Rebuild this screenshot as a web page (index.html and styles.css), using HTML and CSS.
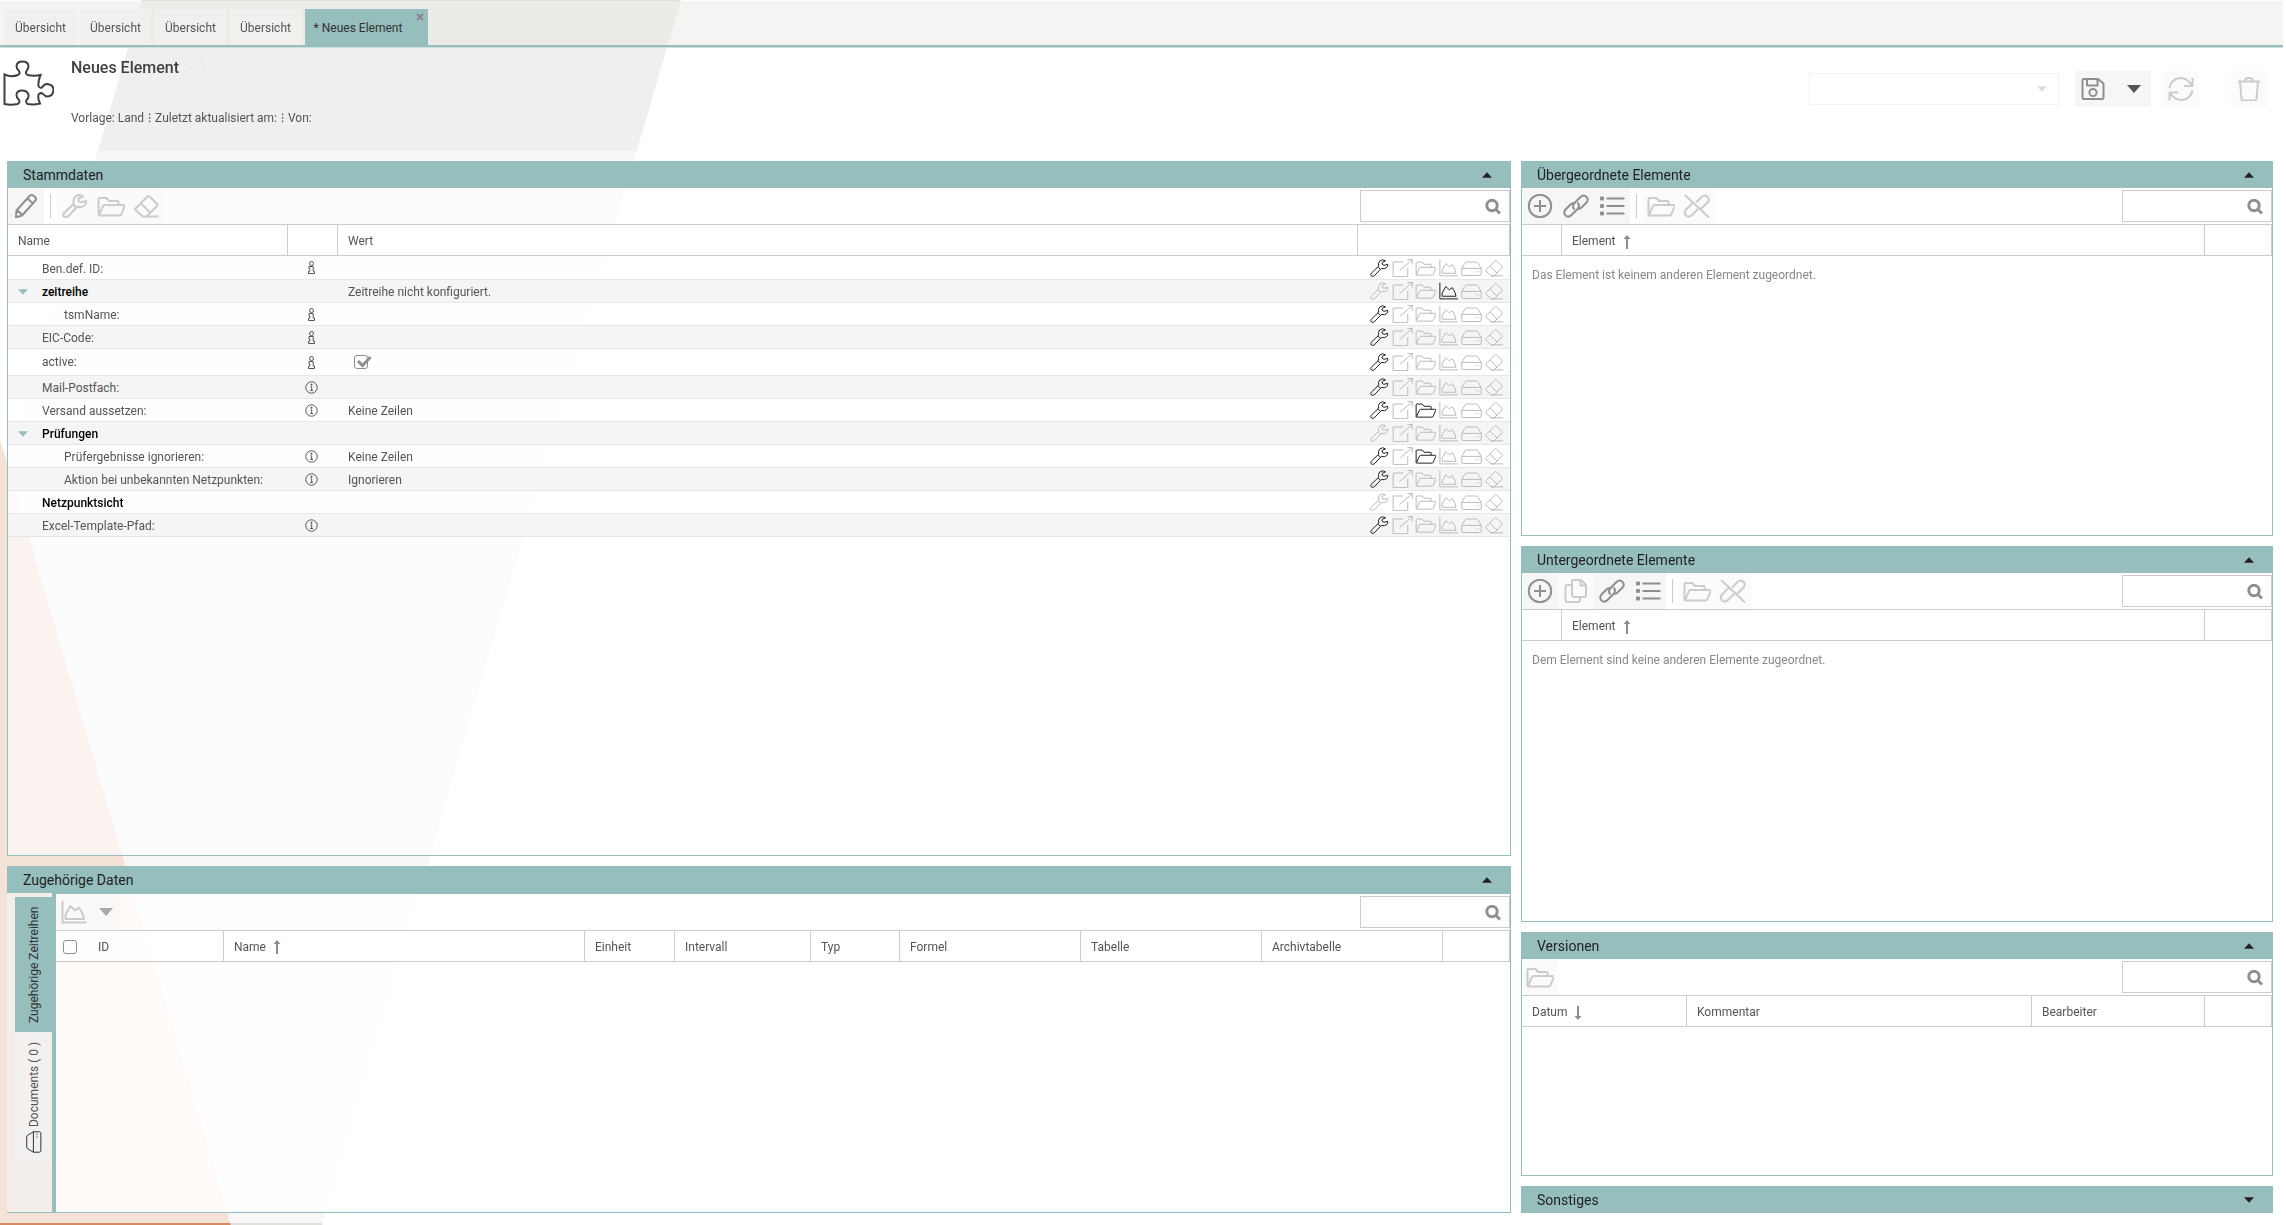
FILE: index.html
```html
<!DOCTYPE html>
<html lang="de">
<head>
<meta charset="utf-8">
<title>Neues Element</title>
<link rel="stylesheet" href="styles.css">
</head>
<body>
<svg class="sprite" aria-hidden="true">
  <symbol id="pencil" viewBox="0 0 28 24"><path d="M4.500 16.500 17.500 2q2-2 4.500 0l1 1q2 2 0 4L10 21.500 4 23.500zM4.500 16.500q3.500 1 5.500 5M15.500 4.500l5.500 5"/></symbol>
  <symbol id="wrench" viewBox="0 0 28 24"><path d="M22 2.500Q18-.5 14.500 2.500 11.500 5.500 13 9.500L3 19q-1.500 2 0 3.500t4 0L16.500 12.500q4 1.500 7-1 2-2 1.500-4.500l-5 1.500-2.500-1.500V4.500zM12 10.500l3.500 3.500M5 20.500h.500"/></symbol>
  <symbol id="folder" viewBox="0 0 28 24"><path d="M1.500 21V5q0-1 1-1h7l2.500 3H20.500q1 0 1 1v3M2 21 6 12q.5-1 1.500-1h19q1.500 0 1 1.500L24.500 20q-.5 1.500-2 1.500H2.500q-1 0-1-1"/></symbol>
  <symbol id="eraser" viewBox="0 0 28 24"><path d="M2.500 14.500 14.500 2.500q1-1 2 0l7.500 7.500q1 1 0 2L13.500 22.500H9.500L2.500 16q-1-.8 0-1.500zM8 9.500l9.500 9.500M9 22.500h16.500"/></symbol>
  <symbol id="popup" viewBox="0 0 28 24"><path d="M21 12v11.500H1.500V4H15M10 15.500 27 .800M20.500.800H27V7.500"/></symbol>
  <symbol id="chart" viewBox="0 0 28 24"><path d="M2.500 1v21.500H26.500M5.500 19V14.500l5-8.500 4.500 4.500 4-3 3.500 6 1.500 5.500z"/></symbol>
  <symbol id="drive" viewBox="0 0 28 24"><path d="M1 12.500 5.500 5q.8-1 2-1h13q1.200 0 2 1L27 12.500V20q0 2-2 2H3q-2 0-2-2zM1 12.500h26M19.500 17h1.500M23 17h1.500"/></symbol>
  <symbol id="plus" viewBox="0 0 28 24"><circle cx="14" cy="12" r="11.200"/><path d="M14 6v12M8 12h12"/></symbol>
  <symbol id="copy" viewBox="0 0 28 24"><path d="M10 1h9l5 5v10q0 2-2 2H12q-2 0-2-2V1M18.500 1v5.500H24M10 6H5Q3.500 6 3.500 8v13q0 2 2 2H16q2 0 2-2v-3"/></symbol>
  <symbol id="link" viewBox="0 0 28 24"><path d="M12.500 15.500q-3-3 0-6.500l6-6q3.500-3 6 0 2.500 2.500 0 5.500l-5 5q-1.500 1.500-3 1.500M15.500 8.500q3 3 0 6.500l-6 6q-3 3-6 .5-2.500-3 0-6l5-5q1.500-1.500 3-1.500"/></symbol>
  <symbol id="unlink" viewBox="0 0 28 24"><path d="M13 8.500l5.500-5.500q3.500-3 6 0 2.500 2.500 0 5.500l-5 5q-1 1-2 1M15 15l-6 6q-3 3-6 .500-2.500-3 0-6l5-5q1-1 2-1M2 1l24 22.500"/></symbol>
  <symbol id="list" viewBox="0 0 28 24"><path d="M8.500 4.500h18M8.500 12h18M8.500 19.500h18M3 3.500h2v2H3zM3 11h2v2H3zM3 18.500h2v2H3z"/></symbol>
  <symbol id="save" viewBox="0 0 28 24"><path d="M5 2h14l5.500 4.500V20q0 2-1.500 2H5q-1.500 0-1.500-2V4Q3.500 2 5 2zM8 2v6.500h10.500V2"/><circle cx="14" cy="15.500" r="3.600"/></symbol>
  <symbol id="refresh" viewBox="0 0 28 24"><path d="M2.500 11Q4 2 13 1q8 0 12 8M25.500 1v8H17M25.500 13q-1.500 9-10.500 10Q7 23 3 15.500M2.500 23.500V15.500H11"/></symbol>
  <symbol id="trash" viewBox="0 0 28 24"><path d="M3 4.500h22M5 4.500 6.500 22q.2 1.500 1.500 1.500h12q1.300 0 1.500-1.500L23 4.500M10 4.500Q10 1 13 1h2q3 0 3 3.500"/></symbol>
  <symbol id="loupe" viewBox="0 0 16 16"><circle cx="7" cy="6.500" r="5.200"/><path d="M10.500 10 15 14.500"/></symbol>
  <symbol id="tri-down" viewBox="0 0 14 8"><path d="M0 0h14L7 8z"/></symbol>
  <symbol id="tri-up" viewBox="0 0 14 8"><path d="M0 8h14L7 0z"/></symbol>
  <symbol id="arrow-up" viewBox="0 0 8 14"><path d="M3 14V4H.500L4 0l3.500 4H5V14z"/></symbol>
  <symbol id="arrow-down" viewBox="0 0 8 14"><path d="M3 0v10H.500L4 14l3.500-4H5V0z"/></symbol>
  <symbol id="info-i" viewBox="0 0 13 13"><circle cx="6.500" cy="2.500" r="2"/><path d="M4 5.500h4.200v4.700h1.300v2.300h-6v-2.300h1.300V7.800H4z"/></symbol>
  <symbol id="info-o" viewBox="0 0 13 13"><circle cx="6.500" cy="6.500" r="5.700"/><path d="M5.500 5.800h1.200v3.700M5.200 9.500h2.800M6 3.200h1v1H6z"/></symbol>
</svg>
<svg class="backdrop" aria-hidden="true">
  <polygon class="bd-orange" points="0,440 7,462 231,1225 0,1225"/>
  <polygon class="bd-grey" points="142,0 681,0 322,1225 231,1225 7,462"/>
</svg>
<div class="app">
  <nav class="tabs">
    <button class="tab">Übersicht</button>
    <button class="tab">Übersicht</button>
    <button class="tab">Übersicht</button>
    <button class="tab">Übersicht</button>
    <button class="tab tab-active">* Neues Element
      <svg class="tab-close" viewBox="0 0 8 8"><path d="M1 1l6 6M7 1 1 7"/></svg></button>
  </nav>
  <header class="head">
    <svg class="puzzle" viewBox="0 0 54 50" aria-hidden="true"><path d="M4.500 18.500Q11 21.500 18 19 20.500 17.500 19 15 16.500 13 16.500 10 17 5.500 22.500 5.500T28.500 10Q28.500 13 26.500 15 25 17.500 27.500 19 34 20.500 40.500 19 38 25 38.500 30 39.500 32.500 42 31.500 44 28 47 28 53.500 28.500 53.500 34 53 40 47.500 40.500 45 40.500 43 38 40.500 36 38.500 38.500 37.500 42 40 47.500 34 49 27.500 48 25.500 46.500 26.500 44 29 42 28.500 39 27.500 34.500 22 34.500T16.500 39Q16.500 42 19 44 20.500 46.500 17.500 48 11 49.500 4.500 48z"/></svg>
    <div class="head-text">
      <h1>Neues Element <span class="status"></span></h1>
      <p>Vorlage: Land <span>⁝</span> Zuletzt aktualisiert am: <span>⁝</span> Von:</p>
    </div>
    <div class="head-tools">
      <div class="pick"><select aria-label="Version" disabled><option></option></select><svg><use href="#tri-down"/></svg></div>
      <div class="save">
        <button class="tool" aria-label="Speichern"><svg><use href="#save"/></svg></button>
        <button class="tool" aria-label="Speicheroptionen"><svg class="tri"><use href="#tri-down"/></svg></button>
      </div>
      <button class="tool" aria-label="Aktualisieren" disabled><svg><use href="#refresh"/></svg></button>
      <button class="tool tool-trash" aria-label="Löschen" disabled><svg><use href="#trash"/></svg></button>
    </div>
  </header>
  <main class="main">
    <div class="col col-left">
      <section class="panel">
        <h2>Stammdaten <svg><use href="#tri-up"/></svg></h2>
        <div class="bar">
          <button class="tool" aria-label="Bearbeiten"><svg><use href="#pencil"/></svg></button>
          <span class="sep"></span>
          <button class="tool" aria-label="Konfigurieren" disabled><svg><use href="#wrench"/></svg></button>
          <button class="tool" aria-label="Öffnen" disabled><svg><use href="#folder"/></svg></button>
          <button class="tool" aria-label="Leeren" disabled><svg><use href="#eraser"/></svg></button>
          <label class="search"><input type="text" aria-label="Suche"><svg><use href="#loupe"/></svg></label>
        </div>
        <table class="grid props">
          <colgroup><col class="w280"><col class="w50"><col><col class="w152"></colgroup>
          <thead><tr><th>Name</th><th></th><th>Wert</th><th></th></tr></thead>
          <tbody>
            <tr><td>Ben.def. ID:</td><td><svg class="info"><use href="#info-i"/></svg></td><td></td><td class="acts"><button aria-label="Konfigurieren"><svg><use href="#wrench"/></svg></button><button disabled aria-label="Extern"><svg><use href="#popup"/></svg></button><button disabled aria-label="Öffnen"><svg><use href="#folder"/></svg></button><button disabled aria-label="Diagramm"><svg><use href="#chart"/></svg></button><button disabled aria-label="Ablage"><svg><use href="#drive"/></svg></button><button disabled aria-label="Leeren"><svg><use href="#eraser"/></svg></button></td></tr>
            <tr class="group"><td><svg class="caret"><use href="#tri-down"/></svg>zeitreihe</td><td></td><td>Zeitreihe nicht konfiguriert.</td><td class="acts"><button disabled aria-label="Konfigurieren"><svg><use href="#wrench"/></svg></button><button disabled aria-label="Extern"><svg><use href="#popup"/></svg></button><button disabled aria-label="Öffnen"><svg><use href="#folder"/></svg></button><button aria-label="Diagramm"><svg><use href="#chart"/></svg></button><button disabled aria-label="Ablage"><svg><use href="#drive"/></svg></button><button disabled aria-label="Leeren"><svg><use href="#eraser"/></svg></button></td></tr>
            <tr class="child"><td>tsmName:</td><td><svg class="info"><use href="#info-i"/></svg></td><td></td><td class="acts"><button aria-label="Konfigurieren"><svg><use href="#wrench"/></svg></button><button disabled aria-label="Extern"><svg><use href="#popup"/></svg></button><button disabled aria-label="Öffnen"><svg><use href="#folder"/></svg></button><button disabled aria-label="Diagramm"><svg><use href="#chart"/></svg></button><button disabled aria-label="Ablage"><svg><use href="#drive"/></svg></button><button disabled aria-label="Leeren"><svg><use href="#eraser"/></svg></button></td></tr>
            <tr><td>EIC-Code:</td><td><svg class="info"><use href="#info-i"/></svg></td><td></td><td class="acts"><button aria-label="Konfigurieren"><svg><use href="#wrench"/></svg></button><button disabled aria-label="Extern"><svg><use href="#popup"/></svg></button><button disabled aria-label="Öffnen"><svg><use href="#folder"/></svg></button><button disabled aria-label="Diagramm"><svg><use href="#chart"/></svg></button><button disabled aria-label="Ablage"><svg><use href="#drive"/></svg></button><button disabled aria-label="Leeren"><svg><use href="#eraser"/></svg></button></td></tr>
            <tr class="tall"><td><label for="active">active:</label></td><td><svg class="info"><use href="#info-i"/></svg></td><td><span class="check"><input type="checkbox" id="active" checked><svg viewBox="0 0 18 15"><path d="M4 6l4.500 4.500L16.500 2"/></svg></span></td><td class="acts"><button aria-label="Konfigurieren"><svg><use href="#wrench"/></svg></button><button disabled aria-label="Extern"><svg><use href="#popup"/></svg></button><button disabled aria-label="Öffnen"><svg><use href="#folder"/></svg></button><button disabled aria-label="Diagramm"><svg><use href="#chart"/></svg></button><button disabled aria-label="Ablage"><svg><use href="#drive"/></svg></button><button disabled aria-label="Leeren"><svg><use href="#eraser"/></svg></button></td></tr>
            <tr><td>Mail-Postfach:</td><td><svg class="info"><use href="#info-o"/></svg></td><td></td><td class="acts"><button aria-label="Konfigurieren"><svg><use href="#wrench"/></svg></button><button disabled aria-label="Extern"><svg><use href="#popup"/></svg></button><button disabled aria-label="Öffnen"><svg><use href="#folder"/></svg></button><button disabled aria-label="Diagramm"><svg><use href="#chart"/></svg></button><button disabled aria-label="Ablage"><svg><use href="#drive"/></svg></button><button disabled aria-label="Leeren"><svg><use href="#eraser"/></svg></button></td></tr>
            <tr><td>Versand aussetzen:</td><td><svg class="info"><use href="#info-o"/></svg></td><td>Keine Zeilen</td><td class="acts"><button aria-label="Konfigurieren"><svg><use href="#wrench"/></svg></button><button disabled aria-label="Extern"><svg><use href="#popup"/></svg></button><button aria-label="Öffnen"><svg><use href="#folder"/></svg></button><button disabled aria-label="Diagramm"><svg><use href="#chart"/></svg></button><button disabled aria-label="Ablage"><svg><use href="#drive"/></svg></button><button disabled aria-label="Leeren"><svg><use href="#eraser"/></svg></button></td></tr>
            <tr class="group"><td><svg class="caret"><use href="#tri-down"/></svg>Prüfungen</td><td></td><td></td><td class="acts"><button disabled aria-label="Konfigurieren"><svg><use href="#wrench"/></svg></button><button disabled aria-label="Extern"><svg><use href="#popup"/></svg></button><button disabled aria-label="Öffnen"><svg><use href="#folder"/></svg></button><button disabled aria-label="Diagramm"><svg><use href="#chart"/></svg></button><button disabled aria-label="Ablage"><svg><use href="#drive"/></svg></button><button disabled aria-label="Leeren"><svg><use href="#eraser"/></svg></button></td></tr>
            <tr class="child"><td>Prüfergebnisse ignorieren:</td><td><svg class="info"><use href="#info-o"/></svg></td><td>Keine Zeilen</td><td class="acts"><button aria-label="Konfigurieren"><svg><use href="#wrench"/></svg></button><button disabled aria-label="Extern"><svg><use href="#popup"/></svg></button><button aria-label="Öffnen"><svg><use href="#folder"/></svg></button><button disabled aria-label="Diagramm"><svg><use href="#chart"/></svg></button><button disabled aria-label="Ablage"><svg><use href="#drive"/></svg></button><button disabled aria-label="Leeren"><svg><use href="#eraser"/></svg></button></td></tr>
            <tr class="child"><td>Aktion bei unbekannten Netzpunkten:</td><td><svg class="info"><use href="#info-o"/></svg></td><td>Ignorieren</td><td class="acts"><button aria-label="Konfigurieren"><svg><use href="#wrench"/></svg></button><button disabled aria-label="Extern"><svg><use href="#popup"/></svg></button><button disabled aria-label="Öffnen"><svg><use href="#folder"/></svg></button><button disabled aria-label="Diagramm"><svg><use href="#chart"/></svg></button><button disabled aria-label="Ablage"><svg><use href="#drive"/></svg></button><button disabled aria-label="Leeren"><svg><use href="#eraser"/></svg></button></td></tr>
            <tr class="group"><td>Netzpunktsicht</td><td></td><td></td><td class="acts"><button disabled aria-label="Konfigurieren"><svg><use href="#wrench"/></svg></button><button disabled aria-label="Extern"><svg><use href="#popup"/></svg></button><button disabled aria-label="Öffnen"><svg><use href="#folder"/></svg></button><button disabled aria-label="Diagramm"><svg><use href="#chart"/></svg></button><button disabled aria-label="Ablage"><svg><use href="#drive"/></svg></button><button disabled aria-label="Leeren"><svg><use href="#eraser"/></svg></button></td></tr>
            <tr><td>Excel-Template-Pfad:</td><td><svg class="info"><use href="#info-o"/></svg></td><td></td><td class="acts"><button aria-label="Konfigurieren"><svg><use href="#wrench"/></svg></button><button disabled aria-label="Extern"><svg><use href="#popup"/></svg></button><button disabled aria-label="Öffnen"><svg><use href="#folder"/></svg></button><button disabled aria-label="Diagramm"><svg><use href="#chart"/></svg></button><button disabled aria-label="Ablage"><svg><use href="#drive"/></svg></button><button disabled aria-label="Leeren"><svg><use href="#eraser"/></svg></button></td></tr>
          </tbody>
        </table>
      </section>
      <section class="panel panel-data">
        <h2>Zugehörige Daten <svg><use href="#tri-up"/></svg></h2>
        <div class="data">
          <div class="vtabs">
            <button class="vtab vtab-active">Zugehörige Zeitreihen</button>
            <button class="vtab"><svg class="vdrive"><use href="#drive"/></svg>Documents ( 0 )</button>
          </div>
          <div class="data-body">
            <div class="bar">
              <button class="tool" aria-label="Diagramm" disabled><svg><use href="#chart"/></svg></button>
              <button class="tool tool-caret" aria-label="Diagrammoptionen" disabled><svg class="tri"><use href="#tri-down"/></svg></button>
              <label class="search"><input type="text" aria-label="Suche"><svg><use href="#loupe"/></svg></label>
            </div>
            <table class="grid">
              <colgroup><col class="w168"><col><col class="w90"><col class="w136"><col class="w89"><col class="w181"><col class="w181"><col class="w181"><col class="w67"></colgroup>
              <thead><tr><th class="th-id"><input type="checkbox" aria-label="Alle auswählen">ID</th><th>Name <svg class="sort"><use href="#arrow-up"/></svg></th><th>Einheit</th><th>Intervall</th><th>Typ</th><th>Formel</th><th>Tabelle</th><th>Archivtabelle</th><th></th></tr></thead>
            </table>
          </div>
        </div>
      </section>
    </div>
    <div class="col col-right">
      <section class="panel">
        <h2>Übergeordnete Elemente <svg><use href="#tri-up"/></svg></h2>
        <div class="bar">
          <button class="tool" aria-label="Neu"><svg><use href="#plus"/></svg></button>
          <button class="tool" aria-label="Verknüpfen"><svg><use href="#link"/></svg></button>
          <button class="tool" aria-label="Liste"><svg><use href="#list"/></svg></button>
          <span class="sep"></span>
          <button class="tool" aria-label="Öffnen" disabled><svg><use href="#folder"/></svg></button>
          <button class="tool" aria-label="Verknüpfung lösen" disabled><svg><use href="#unlink"/></svg></button>
          <label class="search"><input type="text" aria-label="Suche"><svg><use href="#loupe"/></svg></label>
        </div>
        <table class="grid">
          <colgroup><col class="w40"><col><col class="w67"></colgroup>
          <thead><tr><th></th><th>Element <svg class="sort"><use href="#arrow-up"/></svg></th><th></th></tr></thead>
        </table>
        <p class="empty">Das Element ist keinem anderen Element zugeordnet.</p>
      </section>
      <section class="panel">
        <h2>Untergeordnete Elemente <svg><use href="#tri-up"/></svg></h2>
        <div class="bar">
          <button class="tool" aria-label="Neu"><svg><use href="#plus"/></svg></button>
          <button class="tool" aria-label="Kopieren" disabled><svg><use href="#copy"/></svg></button>
          <button class="tool" aria-label="Verknüpfen"><svg><use href="#link"/></svg></button>
          <button class="tool" aria-label="Liste"><svg><use href="#list"/></svg></button>
          <span class="sep"></span>
          <button class="tool" aria-label="Öffnen" disabled><svg><use href="#folder"/></svg></button>
          <button class="tool" aria-label="Verknüpfung lösen" disabled><svg><use href="#unlink"/></svg></button>
          <label class="search"><input type="text" aria-label="Suche"><svg><use href="#loupe"/></svg></label>
        </div>
        <table class="grid">
          <colgroup><col class="w40"><col><col class="w67"></colgroup>
          <thead><tr><th></th><th>Element <svg class="sort"><use href="#arrow-up"/></svg></th><th></th></tr></thead>
        </table>
        <p class="empty">Dem Element sind keine anderen Elemente zugeordnet.</p>
      </section>
      <section class="panel">
        <h2>Versionen <svg><use href="#tri-up"/></svg></h2>
        <div class="bar">
          <button class="tool" aria-label="Öffnen" disabled><svg><use href="#folder"/></svg></button>
          <label class="search"><input type="text" aria-label="Suche"><svg><use href="#loupe"/></svg></label>
        </div>
        <table class="grid">
          <colgroup><col class="w165"><col><col class="w173"><col class="w67"></colgroup>
          <thead><tr><th>Datum <svg class="sort"><use href="#arrow-down"/></svg></th><th>Kommentar</th><th>Bearbeiter</th><th></th></tr></thead>
        </table>
      </section>
      <section class="panel panel-closed">
        <h2>Sonstiges <svg><use href="#tri-down"/></svg></h2>
      </section>
    </div>
  </main>
</div>
</body>
</html>
```
FILE: styles.css
```css
* { box-sizing: border-box; }
body {
  margin: 0;
  background: #fff;
  color: #555;
  font: 12px/16px Roboto, "Liberation Sans", sans-serif;
}
button, input, select { font: inherit; color: inherit; margin: 0; }
button { border: 0; padding: 0; background: none; }
svg { flex: none; }
.sprite { position: absolute; width: 0; height: 0; }
.sprite * { vector-effect: non-scaling-stroke; }

.backdrop { position: fixed; inset: 0; width: 100%; height: 100%; z-index: -1; }
.bd-orange { fill: #d48b60; }
.bd-grey { fill: #e1dfdc; }

.app {
  display: flex;
  flex-direction: column;
  min-height: 100vh;
  padding: 1px 3px 2px 0;
}

/* Tab strip */
.tabs {
  display: flex;
  gap: 4px;
  height: 46px;
  padding: 8px 5px 0;
  background: rgba(241, 239, 237, .7);
  border-bottom: 2px solid #96bebd;
}
.tab { width: 71px; padding-top: 2px; background: #f1f0ef; }
.tab-active {
  position: relative;
  width: 123px;
  padding-right: 17px;
  background: #96bebd;
  color: #333;
}
.tab-close {
  position: absolute;
  top: 4px;
  right: 4px;
  width: 8px;
  height: 8px;
  fill: none;
  stroke: #888;
  stroke-width: 2;
}

/* Element header */
.head {
  display: flex;
  height: 104px;
  padding-right: 16px;
  background: rgba(255, 255, 255, .5);
  border-top: 1px solid #cbdfde;
}
.puzzle {
  width: 54px;
  height: 50px;
  margin: 8px 17px 0 0;
  fill: none;
  stroke: #404040;
  stroke-width: 2;
}
.head-text { flex: 1; }
h1 {
  display: flex;
  align-items: center;
  gap: 12px;
  margin: 10px 0 32px;
  font-size: 16px;
  line-height: 20px;
  font-weight: 500;
  color: #404040;
}
.status { width: 14px; height: 14px; border: 1px solid #e9e8e7; border-radius: 50%; }
.head-text p { margin: 0; }
.head-text p span { margin: 0 1px; }
.head-tools { display: flex; align-items: flex-start; padding-top: 23px; }
.pick { position: relative; margin: 2px 16px 0 0; }
.pick select {
  display: block;
  width: 250px;
  height: 32px;
  appearance: none;
  background: none;
  border: 1px solid #eee;
}
.pick svg {
  position: absolute;
  right: 12px;
  top: 13px;
  width: 10px;
  height: 6px;
  fill: #ddd;
}
.save { display: flex; margin-right: 12px; }
.tool-trash { margin-left: 32px; }

/* Tool buttons */
.tool {
  display: flex;
  align-items: center;
  justify-content: center;
  flex: none;
  width: 36px;
  height: 36px;
  background: rgba(240, 240, 240, .6);
  color: #8f8f8f;
}
.tool svg { width: 28px; height: 24px; fill: none; stroke: currentColor; stroke-width: 2; stroke-linejoin: round; }
.tool:disabled { background: rgba(247, 247, 247, .5); color: #ccc; }
.tool .tri { width: 14px; height: 8px; fill: #555; stroke: none; }
.tool:disabled .tri { fill: #aaa; }
.save .tool:last-child { width: 40px; padding-left: 5px; }
.tool-caret { width: 28px; }

/* Panels */
.main {
  flex: 1;
  display: grid;
  grid-template-columns: 2fr 1fr;
  gap: 10px;
  padding: 10px 10px 10px 7px;
  background: rgba(255, 255, 255, .75);
}
.col { display: grid; gap: 10px; min-width: 0; }
.col-left { grid-template-rows: 2fr 1fr; }
.col-right { grid-template-rows: 20fr 20fr 13fr auto; }
.panel {
  display: flex;
  flex-direction: column;
  min-width: 0;
  background: rgba(255, 255, 255, .6);
  border: 1px solid #96bebd;
  border-top: 0;
}
h2 {
  display: flex;
  align-items: center;
  justify-content: space-between;
  flex: none;
  height: 27px;
  margin: 0;
  padding: 1px 18px 0 15px;
  background: #96bebd;
  font-size: 14px;
  line-height: 20px;
  font-weight: 400;
  color: #222;
}
h2 svg { width: 10px; height: 6px; fill: #222; }
.panel-closed { border: 0; }
.panel-closed h2 { padding-left: 16px; padding-right: 19px; }
.bar {
  display: flex;
  flex: none;
  height: 37px;
  border-bottom: 1px solid #ccc;
}
.sep { width: 1px; height: 24px; margin: 6px 6px; background: #ccc; }
.search { position: relative; margin: 2px 0 0 auto; }
.search input {
  display: block;
  width: 150px;
  height: 32px;
  padding: 0 32px 0 8px;
  background: rgba(255, 255, 255, .8);
  border: 1px solid #ccc;
}
.search svg {
  position: absolute;
  right: 9px;
  top: 9px;
  width: 16px;
  height: 16px;
  fill: none;
  stroke: #8f8f8f;
  stroke-width: 3;
}

/* Tables */
.grid { width: 100%; table-layout: fixed; border-spacing: 0; }
.grid th {
  height: 31px;
  padding: 2px 10px 0;
  background: rgba(255, 255, 255, .8);
  border-right: 1px solid #ccc;
  border-bottom: 1px solid #ccc;
  font-weight: 400;
  text-align: left;
  white-space: nowrap;
}
.w40 { width: 40px; }
.w50 { width: 50px; }
.w67 { width: 67px; }
.w89 { width: 89px; }
.w90 { width: 90px; }
.w136 { width: 136px; }
.w152 { width: 152px; }
.w165 { width: 165px; }
.w168 { width: 168px; }
.w173 { width: 173px; }
.w181 { width: 181px; }
.w280 { width: 280px; }
.grid td {
  height: 23px;
  padding: 2px 10px 0;
  border-bottom: 1px solid #e7e7e7;
  background: rgba(255, 255, 255, .6);
  white-space: nowrap;
}
.props tbody tr:nth-child(even) td { background: #f5f5f5; }
.props tbody tr:first-child td { height: 24px; }
.props .tall td { height: 27px; padding-top: 0; }
.props td:first-child { position: relative; padding-left: 34px; }
.props .child td:first-child { padding-left: 56px; }
.props .group td:first-child { color: #000; font-weight: 500; }
.props td:nth-child(2) { padding: 0 3px 0 0; }
.caret { position: absolute; left: 10px; top: 9px; width: 10px; height: 6px; fill: #96bebd; }
.info { display: block; width: 13px; height: 13px; margin: 0 auto; fill: none; stroke: #555; stroke-width: 1; }
.grid .acts { padding: 0 4px 0 10px; font-size: 0; line-height: 0; }
.acts button { width: 23px; height: 18px; color: #222; }
.acts button:disabled { color: #bbb; }
.acts svg { width: 21px; height: 18px; fill: none; stroke: currentColor; stroke-width: 1; }
.sort { width: 8px; height: 14px; margin-left: 4px; vertical-align: middle; fill: #8f8f8f; }
input[type="checkbox"] {
  appearance: none;
  display: block;
  width: 14px;
  height: 14px;
  border: 1px solid #8f8f8f;
  border-radius: 3px;
  background: #fff;
}
.check { position: relative; display: block; margin-left: 6px; }
.check svg { position: absolute; left: 0; top: 0; width: 18px; height: 15px; fill: none; stroke: #8f8f8f; stroke-width: 3; }
.grid .th-id { padding-left: 7px; }
.th-id input { display: inline-block; margin-right: 21px; vertical-align: middle; }
.empty { margin: 11px 10px; color: #888; }

/* Related data with vertical tabs */
.panel-data { background: none; border-left: 0; }
.panel-data h2 { padding-left: 16px; }
.data { flex: 1; display: flex; }
.vtabs {
  display: flex;
  flex-direction: column;
  width: 45px;
  padding: 4px 0 0 8px;
  background: rgba(243, 243, 243, .7);
}
.vtab {
  display: flex;
  align-items: center;
  justify-content: center;
  gap: 4px;
  width: 37px;
  height: 130px;
  background: #f2f1f0;
  writing-mode: vertical-rl;
  transform: rotate(180deg);
}
.vtab-active { height: 135px; background: #96bebd; color: #333; }
.vdrive { width: 22px; height: 22px; fill: none; stroke: #333; stroke-width: 1; transform: rotate(90deg); }
.data-body {
  flex: 1;
  min-width: 0;
  background: rgba(255, 255, 255, .85);
  border-left: 4px solid #96bebd;
  border-top: 1px solid #96bebd;
}
```
